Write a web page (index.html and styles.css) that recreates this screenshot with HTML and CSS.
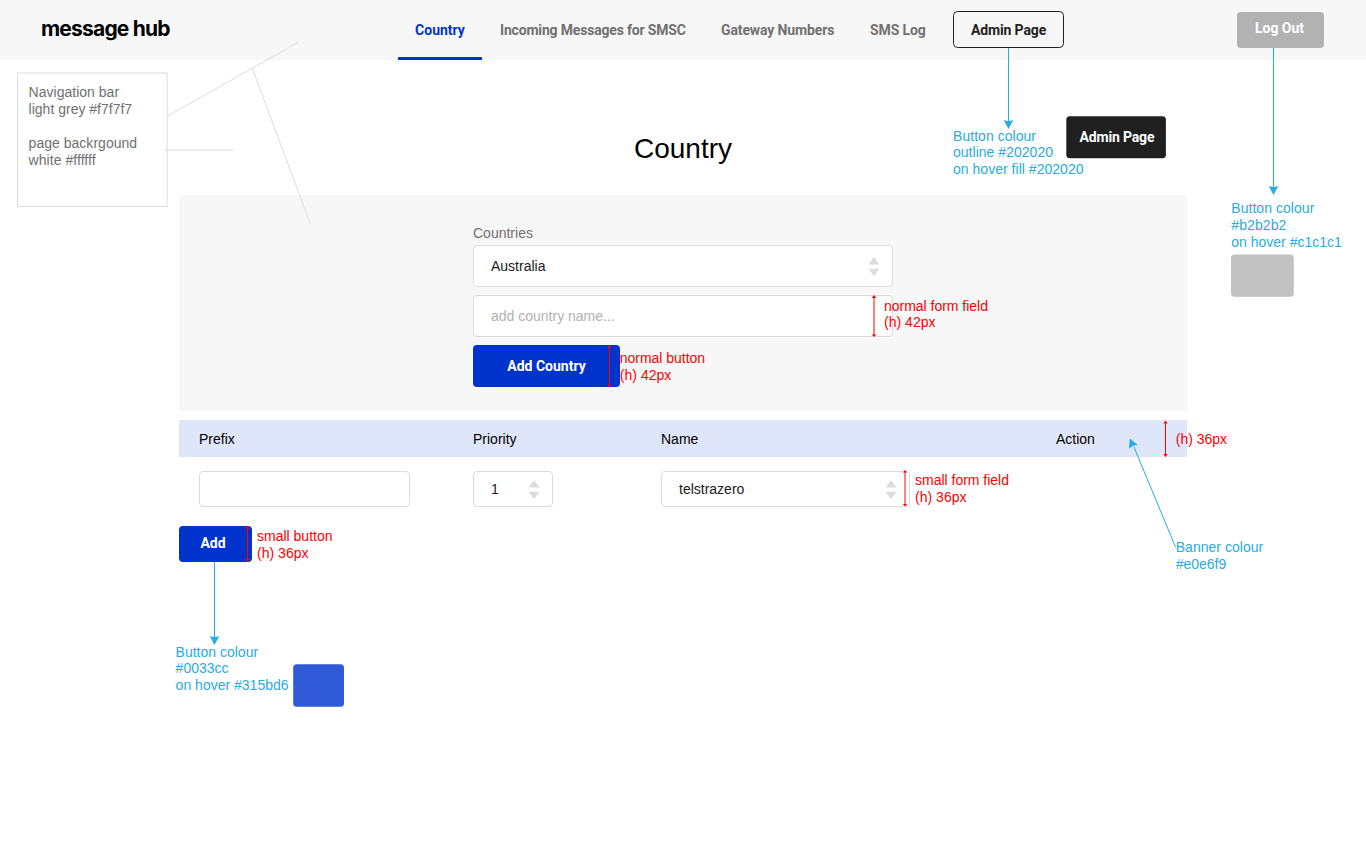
FILE: index.html
```html
<!DOCTYPE html>
<html lang="en">
<head>
<meta charset="utf-8">
<title>message hub</title>
<link rel="stylesheet" href="styles.css">
</head>
<body>
<header class="topbar">
  <div class="logo">message hub</div>
  <nav class="nav">
    <a class="tab tab-country active">Country</a>
    <a class="tab tab-incoming">Incoming Messages for SMSC</a>
    <a class="tab tab-gateway">Gateway Numbers</a>
    <a class="tab tab-log">SMS Log</a>
    <a class="admin">Admin Page</a>
  </nav>
  <a class="logout">Log Out</a>
</header>
<main class="page">
  <h1 class="title">Country</h1>
  <section class="panel">
    <div class="label">Countries</div>
    <div class="field"><span>Australia</span>
      <svg class="arrows" viewBox="0 0 12 19"><path d="M6 0L11.5 7.500H.5zM6 19L.5 11.700h11z"/></svg></div>
    <div class="field placeholder"><span>add country name...</span></div>
    <div class="button">Add Country</div>
  </section>
  <div class="banner columns"><span>Prefix</span><span>Priority</span><span>Name</span><span>Action</span></div>
  <div class="row columns">
    <div class="field small prefix"></div>
    <div class="field small priority"><span>1</span>
      <svg class="arrows" viewBox="0 0 12 19"><path d="M6 0L11.5 7.500H.5zM6 19L.5 11.700h11z"/></svg></div>
    <div class="field small name"><span>telstrazero</span>
      <svg class="arrows" viewBox="0 0 12 19"><path d="M6 0L11.5 7.500H.5zM6 19L.5 11.700h11z"/></svg></div>
  </div>
  <div class="button button-small">Add</div>
</main>
<svg class="notes" width="1366" height="861" viewBox="0 0 1366 861">
  <defs>
    <path id="head" d="M0 0L-4.8-9Q0-7.2 4.8-9z"/>
  </defs>
  <g class="grey-line">
    <rect x="17.5" y="73" width="149.6" height="133.5"/>
    <path d="M167.5 116.2L298 42.3M252.3 68.3L310.3 224M164.5 150H234"/>
  </g>
  <g class="grey-text">
    <text x="28.6" y="97" textLength="90.5">Navigation bar</text>
    <text x="28.6" y="114" textLength="103.5">light grey #f7f7f7</text>
    <text x="28.6" y="148" textLength="108.5">page backrgound</text>
    <text x="28.6" y="165" textLength="67">white #ffffff</text>
  </g>
  <g class="blue">
    <path class="line" d="M1008.5 48V121M1273.5 48V187M214.5 562V637M1175.5 547L1134 447"/>
    <use href="#head" x="1008.5" y="129"/>
    <use href="#head" x="1273.5" y="195"/>
    <use href="#head" x="214.5" y="645"/>
    <use href="#head" transform="translate(1129.8 438.5) rotate(157)"/>
    <text x="953" y="141" textLength="83">Button colour</text>
    <text x="953" y="157" textLength="100">outline #202020</text>
    <text x="953" y="174" textLength="130.5">on hover fill #202020</text>
    <text x="1231.3" y="213" textLength="83">Button colour</text>
    <text x="1231.3" y="230" textLength="55">#b2b2b2</text>
    <text x="1231.3" y="247" textLength="110.5">on hover #c1c1c1</text>
    <text x="1175.7" y="552" textLength="87.5">Banner colour</text>
    <text x="1175.7" y="569" textLength="50.5">#e0e6f9</text>
    <text x="175.6" y="657" textLength="82.5">Button colour</text>
    <text x="175.6" y="673" textLength="53">#0033cc</text>
    <text x="175.6" y="690" textLength="113">on hover #315bd6</text>
  </g>
  <rect class="swatch-dark" x="1066.3" y="116.3" width="99.6" height="42" rx="3.5"/>
  <text class="swatch-text" x="1079.5" y="142" textLength="75">Admin Page</text>
  <rect class="swatch-grey" x="1231" y="254.4" width="62.8" height="42.4" rx="3.5"/>
  <rect class="swatch-blue" x="293.2" y="664.3" width="50.8" height="42.4" rx="3.5"/>
  <g class="red">
    <path class="line" d="M874 297V336M609.5 347V386M1165.5 422V456M905 472V505M247.5 527V560"/>
    <path d="M871.8 298L874 295l2.2 3zM871.8 334.500l2.2 2.5 2.2-2.5zM607.3 348l2.2-3 2.2 3zM607.3 384.500l2.2 3 2.2-3zM1163.300 423.500l2.2-3 2.2 3zM1163.300 454l2.2 3 2.2-3zM902.800 472.500l2.2-2.500 2.2 2.500zM902.800 504l2.2 2.500 2.2-2.500zM245.300 528.500l2.2-3 2.2 3zM245.300 559l2.2 3 2.2-3z"/>
    <text x="884" y="311" textLength="104">normal form field</text>
    <text x="884" y="327" textLength="51.500">(h) 42px</text>
    <text x="619.8" y="363" textLength="85.300">normal button</text>
    <text x="619.8" y="380" textLength="51.500">(h) 42px</text>
    <text x="1175.8" y="444" textLength="51.300">(h) 36px</text>
    <text x="915" y="485" textLength="94">small form field</text>
    <text x="915" y="502" textLength="51.500">(h) 36px</text>
    <text x="257" y="541" textLength="75.500">small button</text>
    <text x="257" y="558" textLength="51.500">(h) 36px</text>
  </g>
</svg>
</body>
</html>
```
FILE: styles.css
```css
* { box-sizing: border-box; }
body {
  margin: 0;
  width: 1366px;
  height: 861px;
  overflow: hidden;
  position: relative;
  background: #fff;
  color: #000;
  font: 14px/16px "Liberation Sans", Arial, sans-serif;
}
.topbar {
  display: grid;
  grid-template-columns: 357px 1fr auto;
  height: 60px;
  padding: 0 42px 0 41px;
  background: #f7f7f7;
}
.logo {
  padding-top: 16px;
  font: 700 21px/26px Inter, sans-serif;
  letter-spacing: -0.8px;
}
.nav { display: flex; white-space: nowrap; }
.tab, .admin, .logout, .button {
  font-family: Roboto, sans-serif;
  font-weight: 700;
  font-size: 14px;
}
.tab { height: 60px; color: #707070; line-height: 61px; letter-spacing: -0.12px; }
.tab-country { width: 84px; text-align: center; margin-right: 18px; letter-spacing: 0; }
.tab-incoming { width: 186px; margin-right: 35px; letter-spacing: -0.18px; }
.tab-gateway { width: 113px; margin-right: 36px; }
.tab-log { width: 56px; margin-right: 27px; }
.active { color: #0033cc; border-bottom: 3px solid #0033cc; }
.admin {
  width: 111px;
  height: 37px;
  margin-top: 11px;
  border: 1px solid #202020;
  border-radius: 4.5px;
  color: #202020;
  line-height: 37px;
  text-align: center;
  letter-spacing: -0.12px;
}
.logout {
  width: 87px;
  height: 36px;
  margin-top: 12px;
  padding-right: 2px;
  border-radius: 4px;
  background: #b2b2b2;
  color: #fff;
  line-height: 33px;
  text-align: center;
}
.page { width: 1008px; margin: 0 auto; }
.title {
  height: 135px;
  margin: 0;
  padding-top: 73px;
  font-size: 28px;
  font-weight: 400;
  line-height: 32px;
  text-align: center;
}
.panel {
  height: 216px;
  padding: 30px 0 0 294px;
  background: #f7f7f7;
}
.label { height: 20px; color: #707070; }
.field {
  display: flex;
  align-items: center;
  justify-content: space-between;
  width: 420px;
  height: 42px;
  margin-bottom: 8px;
  padding: 0 12px 0 17px;
  border: 1px solid #dcdcdc;
  border-radius: 4px;
  background: #fff;
  color: #202020;
}
.placeholder { color: #b2b2b2; }
.arrows { width: 12px; height: 19px; fill: #dcdcdc; }
.button {
  width: 147px;
  height: 42px;
  border-radius: 4px;
  background: #0033cc;
  color: #fff;
  line-height: 42px;
  text-align: center;
}
.columns {
  display: grid;
  grid-template-columns: 274px 188px 395px 1fr;
  padding-left: 20px;
}
.banner {
  height: 37px;
  margin-top: 9px;
  background: #e0e6f9;
  line-height: 38px;
}
.row { padding-top: 14px; }
.small { height: 36px; margin: 0; }
.prefix { width: 211px; }
.priority { width: 80px; }
.name { width: 249px; }
.button-small { width: 73px; height: 36px; margin-top: 18.5px; padding-right: 5px; line-height: 34px; }
.notes { position: absolute; left: 0; top: 0; }
.grey-line { fill: none; stroke: #dcdcdc; }
.grey-text { fill: #707070; }
.blue { fill: #29abe2; }
.red { fill: #f00; }
.blue .line { fill: none; stroke: #29abe2; }
.red .line { fill: none; stroke: #f00; }
.swatch-dark { fill: #202020; }
.swatch-grey { fill: #c1c1c1; }
.swatch-blue { fill: #315bd6; }
.swatch-text { fill: #fff; font: 700 14px Roboto, sans-serif; }
```
